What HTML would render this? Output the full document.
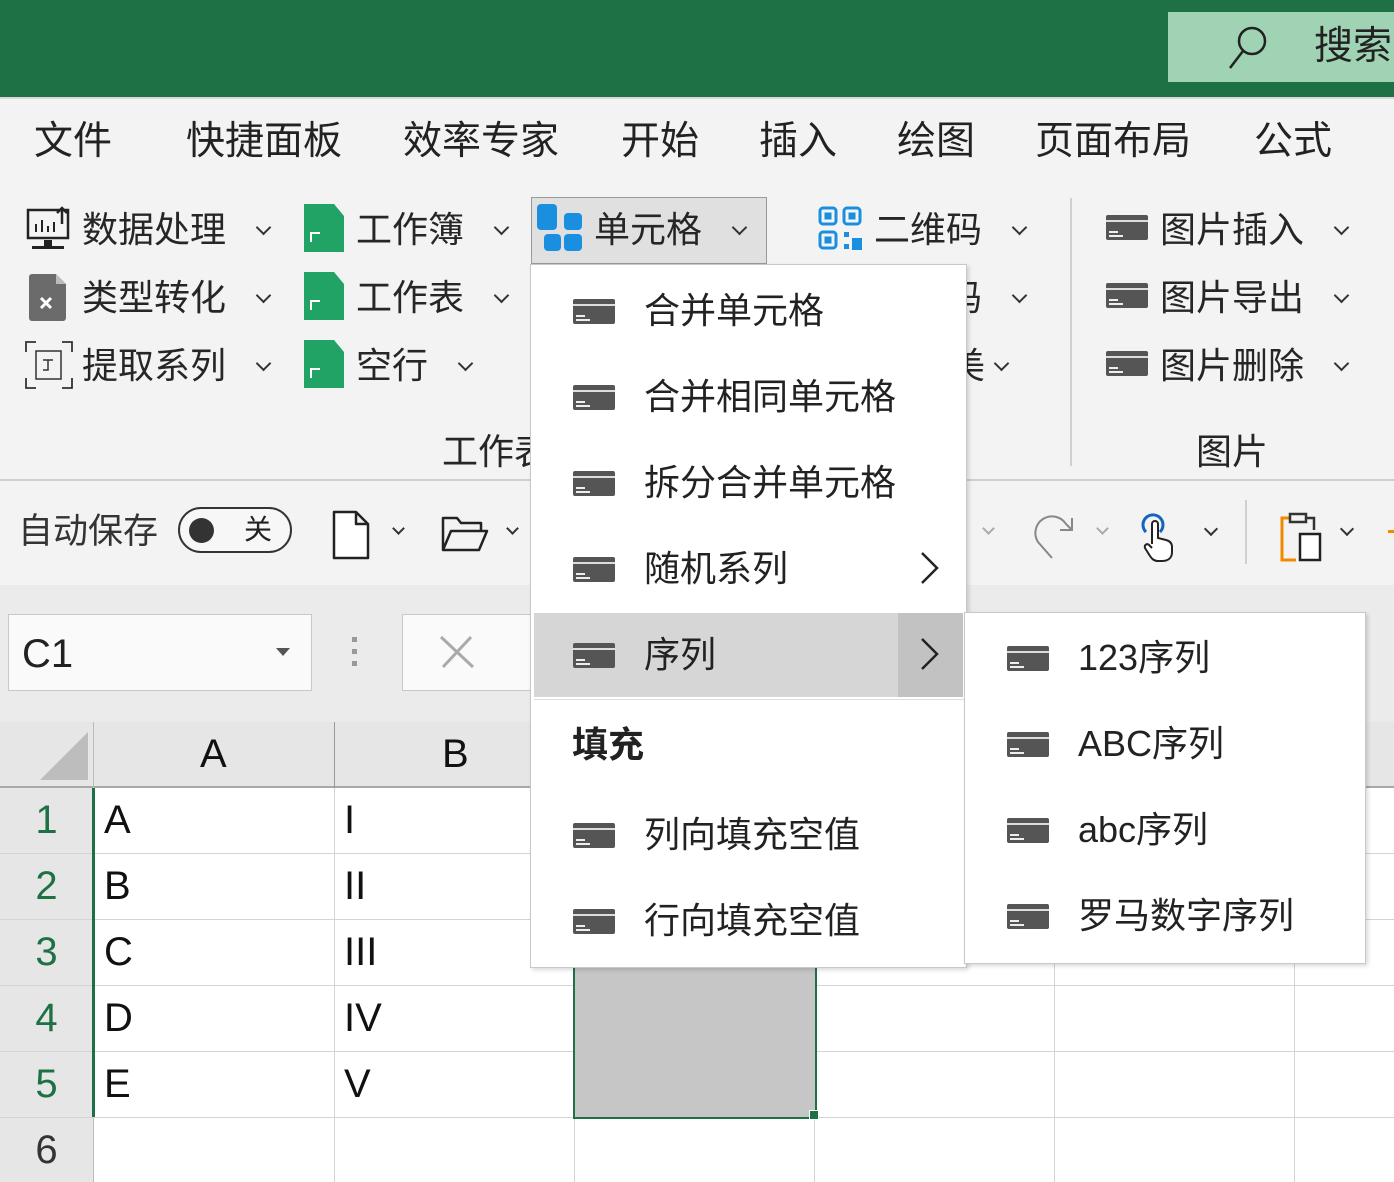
<!DOCTYPE html>
<html><head><meta charset="utf-8"><style>
*{margin:0;padding:0;box-sizing:border-box}
body{width:1394px;height:1182px;overflow:hidden;position:relative;background:#fff;font-family:"Liberation Sans","Noto Sans CJK SC",sans-serif;color:#222}
.a{position:absolute;white-space:nowrap}
.t{font-size:39px;line-height:42px}
.r{font-size:36px;line-height:40px;color:#262626}
.m{font-size:36px;line-height:40px;color:#222}
.chev{position:absolute;width:11px;height:11px;border-right:2.5px solid #333;border-bottom:2.5px solid #333;transform:rotate(45deg)}
.gl{position:absolute;background:#d4d4d4}
.cell{font-size:40px;line-height:40px;color:#111}
.rh{font-size:40px;line-height:40px;color:#333;width:93px;text-align:center}
.gd{width:20px;height:26px;background:#21a366;position:absolute;clip-path:polygon(0 0,75% 0,100% 25%,100% 100%,0 100%)}
</style></head><body>
<div class="a" style="left:0;top:0;width:1394px;height:97px;background:#1e7145"></div>
<div class="a" style="left:1168px;top:12px;width:226px;height:70px;background:#9fd3b4"></div>
<svg class="a" style="left:1226px;top:24px" width="44" height="46"><circle cx="26" cy="17" r="13" fill="none" stroke="#222" stroke-width="2.5"/><line x1="17" y1="27" x2="4" y2="44" stroke="#222" stroke-width="2.5"/></svg>
<div class="a t" style="left:1314px;top:26px;color:#222">搜索</div>
<div class="a" style="left:0;top:97px;width:1394px;height:383px;background:#f3f3f3;border-top:2px solid #d9d9d9"></div>
<div class="a t" style="left:34px;top:121px">文件</div>
<div class="a t" style="left:186px;top:121px">快捷面板</div>
<div class="a t" style="left:403px;top:121px">效率专家</div>
<div class="a t" style="left:621px;top:121px">开始</div>
<div class="a t" style="left:759px;top:121px">插入</div>
<div class="a t" style="left:897px;top:121px">绘图</div>
<div class="a t" style="left:1035px;top:121px">页面布局</div>
<div class="a t" style="left:1254px;top:121px">公式</div>
<svg class="a" style="left:26px;top:204px" width="48" height="48"><rect x="2" y="6" width="40" height="28" fill="none" stroke="#222" stroke-width="2.5"/><path d="M10 28v-8M16 28v-12M22 28v-6M28 28v-10" stroke="#222" stroke-width="2"/><path d="M36 20V4M31 9l5-5 5 5" stroke="#222" stroke-width="2.5" fill="none"/><rect x="18" y="36" width="8" height="6" fill="#222"/><rect x="6" y="42" width="32" height="3" fill="#222"/></svg>
<div class="a r" style="left:82px;top:210px">数据处理</div>
<div class="chev" style="left:258px;top:222px"></div>
<svg class="a" style="left:28px;top:272px" width="42" height="50"><path d="M4 2h24l10 10v34a3 3 0 0 1-3 3H4a3 3 0 0 1-3-3V5a3 3 0 0 1 3-3z" fill="#6b6b6b"/><path d="M28 2v10h10z" fill="#bbb"/><path d="M13 26l10 10M23 26l-10 10" stroke="#fff" stroke-width="3"/></svg>
<div class="a r" style="left:82px;top:278px">类型转化</div>
<div class="chev" style="left:258px;top:290px"></div>
<svg class="a" style="left:24px;top:340px" width="50" height="50"><path d="M2 12V2h10M38 2h10v10M48 38v10H38M12 48H2V38" stroke="#333" stroke-width="1.8" fill="none"/><rect x="12" y="11" width="25" height="28" fill="none" stroke="#333" stroke-width="1.5"/><path d="M19 20h10M24 20v10h-5" stroke="#333" stroke-width="1.5" fill="none"/></svg>
<div class="a r" style="left:82px;top:346px">提取系列</div>
<div class="chev" style="left:258px;top:358px"></div>
<div class="gd" style="left:304px;top:204px;width:40px;height:48px"></div><div class="a" style="left:310px;top:232px;width:10px;height:2px;background:#fff"></div><div class="a" style="left:310px;top:232px;width:2px;height:10px;background:#fff"></div>
<div class="a r" style="left:356px;top:210px">工作簿</div>
<div class="chev" style="left:496px;top:222px"></div>
<div class="gd" style="left:304px;top:272px;width:40px;height:48px"></div><div class="a" style="left:310px;top:300px;width:10px;height:2px;background:#fff"></div><div class="a" style="left:310px;top:300px;width:2px;height:10px;background:#fff"></div>
<div class="a r" style="left:356px;top:278px">工作表</div>
<div class="chev" style="left:496px;top:290px"></div>
<div class="gd" style="left:304px;top:340px;width:40px;height:48px"></div><div class="a" style="left:310px;top:368px;width:10px;height:2px;background:#fff"></div><div class="a" style="left:310px;top:368px;width:2px;height:10px;background:#fff"></div>
<div class="a r" style="left:356px;top:346px">空行</div>
<div class="chev" style="left:460px;top:358px"></div>
<div class="a r" style="left:442px;top:432px">工作表</div>
<div class="a" style="left:531px;top:197px;width:236px;height:67px;background:#e0e0e0;border:1.5px solid #999"></div>
<svg class="a" style="left:536px;top:203px" width="52" height="50"><rect x="1" y="1" width="20" height="26" rx="4" fill="#1a8fe0"/><rect x="28" y="10" width="18" height="17" rx="4" fill="#1a8fe0"/><rect x="8" y="31" width="17" height="17" rx="4" fill="#1a8fe0"/><rect x="28" y="31" width="18" height="17" rx="4" fill="#1a8fe0"/></svg>
<div class="a r" style="left:594px;top:210px">单元格</div>
<div class="chev" style="left:734px;top:222px"></div>
<svg class="a" style="left:818px;top:206px" width="46" height="46" fill="none" stroke="#1a8fe0" stroke-width="3"><rect x="2" y="2" width="16" height="16" rx="3"/><rect x="26" y="2" width="16" height="16" rx="3"/><rect x="2" y="26" width="16" height="16" rx="3"/><rect x="8" y="8" width="4" height="4" fill="#1a8fe0"/><rect x="32" y="8" width="4" height="4" fill="#1a8fe0"/><rect x="8" y="32" width="4" height="4" fill="#1a8fe0"/><rect x="26" y="26" width="5" height="5" fill="#1a8fe0" stroke="none"/><rect x="34" y="32" width="10" height="12" fill="#1a8fe0" stroke="none"/><rect x="26" y="38" width="5" height="5" fill="#1a8fe0" stroke="none"/></svg>
<div class="a r" style="left:874px;top:210px">二维码</div>
<div class="chev" style="left:1014px;top:222px"></div>
<div class="a r" style="left:874px;top:278px">条形码</div>
<div class="chev" style="left:1014px;top:290px"></div>
<div class="a r" style="left:877px;top:346px">表格美</div>
<div class="chev" style="left:996px;top:358px"></div>
<div class="a" style="left:1070px;top:198px;width:2px;height:268px;background:#cfcfcf"></div>
<div class="a" style="left:1106px;top:212px;width:44px;height:30px"><svg width="44" height="30"><rect x="0" y="3" width="42" height="25" rx="2" fill="#555"/><rect x="0" y="8" width="42" height="2" fill="#ddd"/><rect x="3" y="19" width="9" height="2" fill="#eee"/><rect x="3" y="23" width="14" height="2" fill="#eee"/></svg></div>
<div class="a r" style="left:1160px;top:210px">图片插入</div><div class="chev" style="left:1336px;top:222px"></div>
<div class="a" style="left:1106px;top:280px;width:44px;height:30px"><svg width="44" height="30"><rect x="0" y="3" width="42" height="25" rx="2" fill="#555"/><rect x="0" y="8" width="42" height="2" fill="#ddd"/><rect x="3" y="19" width="9" height="2" fill="#eee"/><rect x="3" y="23" width="14" height="2" fill="#eee"/></svg></div>
<div class="a r" style="left:1160px;top:278px">图片导出</div><div class="chev" style="left:1336px;top:290px"></div>
<div class="a" style="left:1106px;top:348px;width:44px;height:30px"><svg width="44" height="30"><rect x="0" y="3" width="42" height="25" rx="2" fill="#555"/><rect x="0" y="8" width="42" height="2" fill="#ddd"/><rect x="3" y="19" width="9" height="2" fill="#eee"/><rect x="3" y="23" width="14" height="2" fill="#eee"/></svg></div>
<div class="a r" style="left:1160px;top:346px">图片删除</div><div class="chev" style="left:1336px;top:358px"></div>
<div class="a r" style="left:1196px;top:432px">图片</div>
<div class="a" style="left:0;top:479px;width:1394px;height:2px;background:#cfcfcf"></div>
<div class="a" style="left:0;top:481px;width:1394px;height:104px;background:#f3f3f3"></div>
<div class="a" style="left:18px;top:512px;font-size:35px;line-height:40px;color:#333">自动保存</div>
<div class="a" style="left:178px;top:507px;width:114px;height:46px;border:2px solid #333;border-radius:23px;background:#f7f7f7"></div>
<div class="a" style="left:189px;top:518px;width:25px;height:25px;border-radius:50%;background:#333"></div>
<div class="a" style="left:244px;top:514px;font-size:28px;line-height:32px">关</div>
<svg class="a" style="left:332px;top:510px" width="40" height="50"><path d="M2 2h22l12 12v34H2z M24 2v12h12" fill="#fff" stroke="#222" stroke-width="2.5" stroke-linejoin="round"/></svg>
<div class="chev" style="left:394px;top:524px;width:9px;height:9px;border-width:2px"></div>
<svg class="a" style="left:440px;top:514px" width="50" height="40"><path d="M3 36V4h14l4 5h20v8 M3 36l8-19h36l-8 19z" fill="none" stroke="#222" stroke-width="2.5" stroke-linejoin="round"/></svg>
<div class="chev" style="left:508px;top:524px;width:9px;height:9px;border-width:2px"></div>
<div class="chev" style="left:984px;top:524px;width:9px;height:9px;border:none;border-right:2px solid #aaa;border-bottom:2px solid #aaa"></div>
<svg class="a" style="left:1032px;top:510px" width="50" height="50"><path d="M20 48 L6 32 A15 15 0 0 1 34 14 L40 20 M40 8 V20 H28" fill="none" stroke="#888" stroke-width="2"/></svg>
<div class="chev" style="left:1098px;top:524px;width:9px;height:9px;border:none;border-right:2px solid #aaa;border-bottom:2px solid #aaa"></div>
<svg class="a" style="left:1138px;top:510px" width="40" height="52"><path d="M8 22a10 10 0 1 1 14 0" fill="none" stroke="#1565c0" stroke-width="3"/><path d="M14 34V14a3 3 0 0 1 6 0v14l8 2c4 1 6 3 6 7v5c0 6-4 9-10 9h-4c-4 0-6-2-8-5l-5-8c-1-3 2-5 4-3l3 3" fill="#fff" stroke="#222" stroke-width="2"/></svg>
<div class="chev" style="left:1206px;top:524px;width:10px;height:10px;border-width:2.5px"></div>
<div class="a" style="left:1245px;top:500px;width:2px;height:64px;background:#cfcfcf"></div>
<svg class="a" style="left:1278px;top:510px" width="48" height="52"><path d="M12 8H4v42h14" fill="none" stroke="#f08a00" stroke-width="3"/><path d="M28 8h8v12" fill="none" stroke="#333" stroke-width="2.5"/><rect x="12" y="4" width="16" height="8" fill="none" stroke="#333" stroke-width="2.5"/><rect x="22" y="24" width="20" height="26" fill="#fff" stroke="#222" stroke-width="2.5"/></svg>
<div class="chev" style="left:1342px;top:524px;width:10px;height:10px;border-width:2.5px"></div>
<div class="a" style="left:1388px;top:530px;width:6px;height:3px;background:#f08a00"></div>
<div class="a" style="left:0;top:585px;width:1394px;height:138px;background:#ebebeb"></div>
<div class="a" style="left:8px;top:614px;width:304px;height:77px;background:#fafafa;border:1.5px solid #c8c8c8"></div>
<div class="a" style="left:22px;top:632px;font-size:40px;line-height:44px;color:#222">C1</div>
<div class="a" style="left:276px;top:648px;width:0;height:0;border-left:7px solid transparent;border-right:7px solid transparent;border-top:8px solid #555"></div>
<div class="a" style="left:352px;top:637px;width:5px;height:5px;background:#999"></div>
<div class="a" style="left:352px;top:649px;width:5px;height:5px;background:#999"></div>
<div class="a" style="left:352px;top:661px;width:5px;height:5px;background:#999"></div>
<div class="a" style="left:402px;top:614px;width:140px;height:77px;background:#fafafa;border:1.5px solid #c8c8c8"></div>
<svg class="a" style="left:438px;top:634px" width="40" height="36"><path d="M3 3l32 30M33 3L5 33" stroke="#aaa" stroke-width="3"/></svg>
<div class="a" style="left:0;top:722px;width:1394px;height:66px;background:#e6e6e6;border-bottom:2px solid #a8a8a8"></div>
<div class="a" style="left:0;top:788px;width:93px;height:394px;background:#e6e6e6"></div>
<svg class="a" style="left:38px;top:730px" width="50" height="50"><path d="M50 2V50H2z" fill="#bdbdbd"/></svg>
<div class="a" style="left:93px;top:722px;width:1px;height:460px;background:#bbb"></div>
<div class="a cell" style="left:200px;top:734px">A</div>
<div class="a" style="left:334px;top:722px;width:1px;height:66px;background:#999"></div>
<div class="a cell" style="left:442px;top:734px">B</div>
<div class="a" style="left:574px;top:722px;width:1px;height:66px;background:#999"></div>
<div class="a" style="left:814px;top:722px;width:1px;height:66px;background:#999"></div>
<div class="a" style="left:1054px;top:722px;width:1px;height:66px;background:#999"></div>
<div class="a" style="left:1294px;top:722px;width:1px;height:66px;background:#999"></div>
<div class="gl" style="left:334px;top:788px;width:1px;height:394px"></div>
<div class="gl" style="left:574px;top:788px;width:1px;height:394px"></div>
<div class="gl" style="left:814px;top:788px;width:1px;height:394px"></div>
<div class="gl" style="left:1054px;top:788px;width:1px;height:394px"></div>
<div class="gl" style="left:1294px;top:788px;width:1px;height:394px"></div>
<div class="gl" style="left:0;top:853px;width:1394px;height:1px"></div>
<div class="gl" style="left:0;top:919px;width:1394px;height:1px"></div>
<div class="gl" style="left:0;top:985px;width:1394px;height:1px"></div>
<div class="gl" style="left:0;top:1051px;width:1394px;height:1px"></div>
<div class="gl" style="left:0;top:1117px;width:1394px;height:1px"></div>
<div class="a" style="left:92px;top:788px;width:3px;height:329px;background:#1e7145"></div>
<div class="a rh" style="left:0;top:800px;color:#1e7145">1</div>
<div class="a rh" style="left:0;top:866px;color:#1e7145">2</div>
<div class="a rh" style="left:0;top:932px;color:#1e7145">3</div>
<div class="a rh" style="left:0;top:998px;color:#1e7145">4</div>
<div class="a rh" style="left:0;top:1064px;color:#1e7145">5</div>
<div class="a rh" style="left:0;top:1130px">6</div>
<div class="a cell" style="left:104px;top:800px">A</div><div class="a cell" style="left:344px;top:800px">I</div>
<div class="a cell" style="left:104px;top:866px">B</div><div class="a cell" style="left:344px;top:866px">II</div>
<div class="a cell" style="left:104px;top:932px">C</div><div class="a cell" style="left:344px;top:932px">III</div>
<div class="a cell" style="left:104px;top:998px">D</div><div class="a cell" style="left:344px;top:998px">IV</div>
<div class="a cell" style="left:104px;top:1064px">E</div><div class="a cell" style="left:344px;top:1064px">V</div>
<div class="a" style="left:573px;top:900px;width:244px;height:219px;background:#c6c6c6;border:2.5px solid #1e7145"></div>
<div class="a" style="left:809px;top:1110px;width:10px;height:10px;background:#1e7145;border:1px solid #fff"></div>
<div class="a" style="left:530px;top:264px;width:437px;height:704px;background:#fff;border:1.5px solid #c8c8c8;box-shadow:2px 2px 4px rgba(0,0,0,.15)"></div>
<div class="a" style="left:534px;top:613px;width:364px;height:84px;background:#d6d6d6"></div>
<div class="a" style="left:898px;top:613px;width:65px;height:84px;background:#c2c2c2"></div>
<div class="a" style="left:534px;top:699px;width:430px;height:1px;background:#ddd"></div>
<svg width="0" height="0" style="position:absolute"><defs><symbol id="ic" viewBox="0 0 44 30"><rect x="0" y="3" width="42" height="25" rx="2" fill="#555"/><rect x="0" y="8" width="42" height="2" fill="#ddd"/><rect x="3" y="19" width="9" height="2" fill="#eee"/><rect x="3" y="23" width="14" height="2" fill="#eee"/></symbol></defs></svg>
<svg class="a" style="left:573px;top:296px" width="44" height="30"><use href="#ic"/></svg>
<div class="a m" style="left:644px;top:291px">合并单元格</div>
<svg class="a" style="left:573px;top:382px" width="44" height="30"><use href="#ic"/></svg>
<div class="a m" style="left:644px;top:377px">合并相同单元格</div>
<svg class="a" style="left:573px;top:468px" width="44" height="30"><use href="#ic"/></svg>
<div class="a m" style="left:644px;top:463px">拆分合并单元格</div>
<svg class="a" style="left:573px;top:554px" width="44" height="30"><use href="#ic"/></svg>
<div class="a m" style="left:644px;top:549px">随机系列</div>
<svg class="a" style="left:918px;top:550px" width="24" height="36"><path d="M4 3l15 15L4 33" fill="none" stroke="#222" stroke-width="2.5"/></svg>
<svg class="a" style="left:573px;top:640px" width="44" height="30"><use href="#ic"/></svg>
<div class="a m" style="left:644px;top:635px">序列</div>
<svg class="a" style="left:918px;top:636px" width="24" height="36"><path d="M4 3l15 15L4 33" fill="none" stroke="#222" stroke-width="2.5"/></svg>
<div class="a m" style="left:572px;top:725px;font-weight:bold">填充</div>
<svg class="a" style="left:573px;top:820px" width="44" height="30"><use href="#ic"/></svg>
<div class="a m" style="left:644px;top:815px">列向填充空值</div>
<svg class="a" style="left:573px;top:906px" width="44" height="30"><use href="#ic"/></svg>
<div class="a m" style="left:644px;top:901px">行向填充空值</div>
<div class="a" style="left:964px;top:612px;width:402px;height:352px;background:#fff;border:1.5px solid #c8c8c8;box-shadow:2px 2px 4px rgba(0,0,0,.15)"></div>
<svg class="a" style="left:1007px;top:643px" width="44" height="30"><use href="#ic"/></svg>
<div class="a m" style="left:1078px;top:638px">123序列</div>
<svg class="a" style="left:1007px;top:729px" width="44" height="30"><use href="#ic"/></svg>
<div class="a m" style="left:1078px;top:724px">ABC序列</div>
<svg class="a" style="left:1007px;top:815px" width="44" height="30"><use href="#ic"/></svg>
<div class="a m" style="left:1078px;top:810px">abc序列</div>
<svg class="a" style="left:1007px;top:901px" width="44" height="30"><use href="#ic"/></svg>
<div class="a m" style="left:1078px;top:896px">罗马数字序列</div>
</body></html>
